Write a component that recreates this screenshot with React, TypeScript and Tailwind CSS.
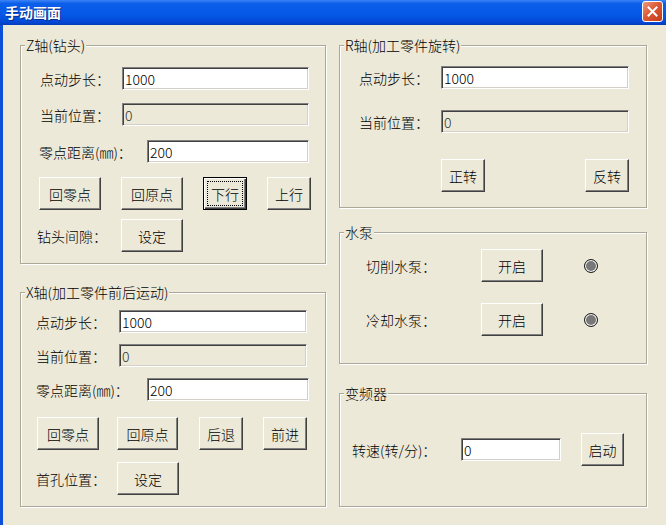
import React from "react";

const raised =
  "border border-t-white border-l-white border-b-[#404040] border-r-[#404040] shadow-[inset_-1px_-1px_0_#808080]";

const Btn = ({
  children,
  className = "",
  focused = false,
}: {
  children: React.ReactNode;
  className?: string;
  focused?: boolean;
}) => {
  if (focused) {
    return (
      <button
        className={`flex items-stretch p-[3px] h-[33px] bg-[#ECE9D8] text-[14px] leading-none text-black border border-black shadow-[inset_1px_1px_0_#fff,inset_-1px_-1px_0_#404040,inset_-2px_-2px_0_#808080] ${className}`}
      >
        <span className="flex-1 flex items-center justify-center border border-dotted border-black">
          {children}
        </span>
      </button>
    );
  }
  return (
    <button
      className={`flex items-center justify-center h-[33px] bg-[#ECE9D8] text-[14px] leading-none text-black ${raised} ${className}`}
    >
      {children}
    </button>
  );
};

const Field = ({
  value,
  disabled = false,
  className = "",
}: {
  value: string;
  disabled?: boolean;
  className?: string;
}) => (
  <input
    readOnly
    value={value}
    className={`h-[23px] px-[2px] text-[14px] outline-none border border-t-[#808080] border-l-[#808080] border-b-white border-r-white shadow-[inset_1px_1px_0_#404040,inset_-1px_-1px_0_#d4d0c8] ${
      disabled ? "bg-[#ECE9D8] text-[#333]" : "bg-white text-black"
    } ${className}`}
  />
);

const Group = ({
  title,
  className = "",
  children,
}: {
  title: string;
  className?: string;
  children: React.ReactNode;
}) => (
  <fieldset
    className={`border border-[#aca899] shadow-[inset_1px_1px_0_#fff,1px_1px_0_#fff] ${className}`}
  >
    <legend className="ml-[4px] px-[1px] bg-[#ECE9D8] text-[14px] leading-[16px]">
      {title}
    </legend>
    <div className="flex flex-col">{children}</div>
  </fieldset>
);

const Label = ({ children, className = "" }: { children: React.ReactNode; className?: string }) => (
  <span className={`shrink-0 whitespace-nowrap text-[14px] leading-[16px] ${className}`}>
    {children}
  </span>
);

export default function App() {
  return (
    <div className="w-[666px] h-[525px] overflow-hidden bg-[#ECE9D8] flex flex-col text-black font-light font-['SimSun','Noto_Sans_CJK_SC',sans-serif]">
      {/* title bar */}
      <div className="h-[25px] shrink-0 flex items-start justify-between bg-[linear-gradient(to_bottom,#3d83f5_0%,#0b5fe9_14%,#0557e6_60%,#0449d6_88%,#033cb8_100%)]">
        <span className="pl-[5px] leading-[25px] text-[14px] font-bold text-white [text-shadow:1px_1px_0_#0b2d8a]">
          手动画面
        </span>
        <span className="mt-[1px] mr-[3px] w-[21px] h-[21px] rounded-[3px] border border-white flex items-center justify-center bg-[linear-gradient(135deg,#ef9a80,#dc5a35_45%,#c23b17)]">
          <svg width="11" height="11" viewBox="0 0 11 11">
            <path d="M1.5 1.5 L9.5 9.5 M9.5 1.5 L1.5 9.5" stroke="#fff" strokeWidth="2" strokeLinecap="square" />
          </svg>
        </span>
      </div>

      <div className="flex-1 flex border-l-[3px] border-l-[#0c4fd8] pt-[12px] pl-[17px] gap-[13px]">
        {/* left column */}
        <div className="flex flex-col w-[306px] gap-[20px]">
          <Group title="Z轴(钻头)" className="h-[227px]">
            <div className="flex items-center mt-[14px] pl-[19px]">
              <Label className="w-[82px]">点动步长：</Label>
              <Field value="1000" className="w-[187px]" />
            </div>
            <div className="flex items-center mt-[13px] pl-[19px]">
              <Label className="w-[82px]">当前位置：</Label>
              <Field value="0" disabled className="w-[187px]" />
            </div>
            <div className="flex items-center mt-[14px] pl-[18px]">
              <Label className="w-[108px]">零点距离(㎜)：</Label>
              <Field value="200" className="w-[162px]" />
            </div>
            <div className="flex items-center mt-[14px] pl-[18px] gap-[20px]">
              <Btn className="w-[62px]">回零点</Btn>
              <Btn className="w-[62px]">回原点</Btn>
              <Btn className="w-[44px]" focused>
                下行
              </Btn>
              <Btn className="w-[44px]">上行</Btn>
            </div>
            <div className="flex items-center mt-[9px] pl-[16px]">
              <Label className="w-[84px]">钻头间隙：</Label>
              <Btn className="w-[62px]">设定</Btn>
            </div>
          </Group>

          <Group title="X轴(加工零件前后运动)" className="h-[223px]">
            <div className="flex items-center mt-[10px] pl-[15px]">
              <Label className="w-[83px]">点动步长：</Label>
              <Field value="1000" className="w-[188px]" />
            </div>
            <div className="flex items-center mt-[11px] pl-[15px]">
              <Label className="w-[83px]">当前位置：</Label>
              <Field value="0" disabled className="w-[188px]" />
            </div>
            <div className="flex items-center mt-[11px] pl-[15px]">
              <Label className="w-[111px]">零点距离(㎜)：</Label>
              <Field value="200" className="w-[162px]" />
            </div>
            <div className="flex items-center mt-[16px] pl-[16px]">
              <Btn className="w-[62px]">回零点</Btn>
              <Btn className="w-[61px] ml-[18px]">回原点</Btn>
              <Btn className="w-[44px] ml-[21px]">后退</Btn>
              <Btn className="w-[44px] ml-[20px]">前进</Btn>
            </div>
            <div className="flex items-center mt-[12px] pl-[15px]">
              <Label className="w-[81px]">首孔位置：</Label>
              <Btn className="w-[62px]">设定</Btn>
            </div>
          </Group>
        </div>

        {/* right column */}
        <div className="flex flex-col w-[308px]">
          <Group title="R轴(加工零件旋转)" className="h-[171px]">
            <div className="flex items-center mt-[13px] pl-[19px]">
              <Label className="w-[82px]">点动步长：</Label>
              <Field value="1000" className="w-[188px]" />
            </div>
            <div className="flex items-center mt-[21px] pl-[19px]">
              <Label className="w-[82px]">当前位置：</Label>
              <Field value="0" disabled className="w-[188px]" />
            </div>
            <div className="flex items-center mt-[26px] pl-[101px]">
              <Btn className="w-[44px]">正转</Btn>
              <Btn className="w-[44px] ml-[100px]">反转</Btn>
            </div>
          </Group>

          <Group title="水泵" className="h-[140px] mt-[16px]">
            <div className="flex items-center mt-[9px] pl-[26px]">
              <Label className="w-[115px]">切削水泵：</Label>
              <Btn className="w-[62px]">开启</Btn>
              <span className="ml-[41px] w-[14px] h-[14px] rounded-full border border-[#222] bg-[#787878] shadow-[inset_0_0_0_1px_#fff]" />
            </div>
            <div className="flex items-center mt-[21px] pl-[26px]">
              <Label className="w-[115px]">冷却水泵：</Label>
              <Btn className="w-[62px]">开启</Btn>
              <span className="ml-[41px] w-[14px] h-[14px] rounded-full border border-[#222] bg-[#787878] shadow-[inset_0_0_0_1px_#fff]" />
            </div>
          </Group>

          <Group title="变频器" className="h-[122px] mt-[21px]">
            <div className="flex items-center mt-[32px] pl-[12px]">
              <Label className="w-[109px]">转速(转/分)：</Label>
              <Field value="0" className="w-[100px]" />
              <Btn className="w-[43px] h-[27px] ml-[20px]">启动</Btn>
            </div>
          </Group>
        </div>
      </div>
    </div>
  );
}
